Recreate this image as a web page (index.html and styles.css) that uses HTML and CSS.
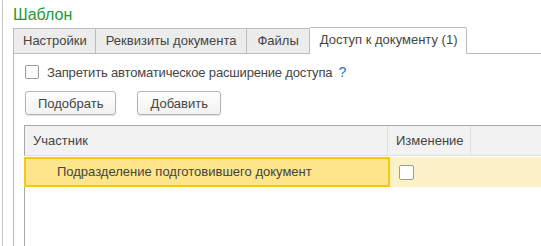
FILE: index.html
```html
<!DOCTYPE html>
<html lang="ru">
<head>
<meta charset="UTF-8">
<title>Шаблон</title>
<link rel="stylesheet" href="styles.css">
</head>
<body>
<div class="form">
    <div class="title">Шаблон</div>
    <div class="tabs">
        <div class="tab first">Настройки</div>
        <div class="tab">Реквизиты документа</div>
        <div class="tab">Файлы</div>
        <div class="tab active">Доступ к документу (1)</div>
        <div class="tab-rest"></div>
    </div>
    <div class="panel">
        <div class="check-row">
            <span class="box"></span>
            <span class="check-label">Запретить автоматическое расширение доступа</span>
            <span class="help">?</span>
        </div>
        <div class="buttons">
            <button class="btn">Подобрать</button>
            <button class="btn">Добавить</button>
        </div>
        <div class="grid">
            <div class="grid-head">
                <div class="col col-name">Участник</div>
                <div class="col col-edit">Изменение</div>
                <div class="col col-rest"></div>
            </div>
            <div class="grid-row">
                <div class="cell cell-name">Подразделение подготовившего документ</div>
                <div class="cell cell-edit"><span class="box"></span></div>
                <div class="cell cell-rest"></div>
            </div>
            <div class="grid-empty"></div>
        </div>
    </div>
</div>
</body>
</html>
```

FILE: styles.css
```css
body {
    margin: 0;
    background: #fff;
    font-family: "Liberation Sans", Arial, sans-serif;
    font-size: 13px;
    color: #444;
    overflow: hidden;
}

.form {
    margin-left: 2px;
    border-left: 1px solid #c6c6c6;
    padding-left: 10px;
    height: 246px;
    box-sizing: border-box;
    display: flex;
    flex-direction: column;
}

.title {
    padding-top: 6px;
    font-size: 16px;
    line-height: 18px;
    color: #1e9b2e;
}

.tabs {
    margin-top: 4px;
    display: flex;
    align-items: flex-end;
    height: 26px;
}

.tab {
    height: 24px;
    line-height: 24px;
    padding: 0 10px;
    background: #ececec;
    border: 1px solid #bcbcbc;
    border-left: none;
    white-space: nowrap;
}

.tab.first {
    border-left: 1px solid #bcbcbc;
    padding: 0 8px 0 9px;
}

.tab.active {
    height: 25px;
    background: #fff;
    border-bottom: none;
    border-radius: 0 2px 0 0;
    padding: 0 9px 1px 10px;
}

.tab-rest {
    flex: 1;
    border-bottom: 1px solid #bcbcbc;
}

.panel {
    flex: 1;
    border-left: 1px solid #bcbcbc;
    padding-left: 10px;
    display: flex;
    flex-direction: column;
}

.box {
    display: inline-block;
    width: 12px;
    height: 12px;
    border: 1px solid #9a9a9a;
    border-radius: 2px;
    background: #fff;
}

.check-row {
    margin-top: 8px;
    height: 20px;
    display: flex;
    align-items: center;
    padding-left: 1px;
}

.check-row .box {
    margin-right: 8px;
}

.check-label {
    letter-spacing: -0.17px;
}

.help {
    margin-left: 6px;
    color: #1a78c2;
    font-size: 14px;
}

.buttons {
    margin-top: 9px;
    display: flex;
    gap: 21px;
    padding-left: 1px;
}

.btn {
    height: 24px;
    padding: 0 12px;
    font-family: inherit;
    font-size: 13px;
    color: #444;
    background: linear-gradient(#fff, #f1f1f1);
    border: 1px solid #b4b4b4;
    border-radius: 3px;
    box-shadow: 0 1px 1px rgba(0, 0, 0, 0.12);
}

.grid {
    margin-top: 10px;
    flex: 1;
    display: flex;
    flex-direction: column;
    border-top: 1px solid #a9a9a9;
}

.grid-head {
    display: flex;
    height: 29px;
    background: #f2f2f2;
    border-left: 1px solid #a9a9a9;
    border-bottom: 1px solid #dedede;
}

.col {
    line-height: 29px;
    padding-left: 8px;
    border-right: 1px solid #dedede;
}

.col-name {
    width: 354px;
}

.col-edit {
    width: 74px;
}

.col-rest {
    flex: 1;
    border-right: none;
}

.grid-row {
    margin-top: 1px;
    display: flex;
    height: 30px;
    background: #fdf2c7;
}

.cell-name {
    width: 331px;
    padding-left: 31px;
    line-height: 26px;
    background: #fde58c;
    border: 2px solid #f6c812;
}

.cell-edit {
    width: 74px;
    padding-left: 9px;
    display: flex;
    align-items: center;
}

.cell-edit .box {
    width: 13px;
    height: 13px;
}

.grid-empty {
    flex: 1;
    border-left: 1px solid #a9a9a9;
}
```
